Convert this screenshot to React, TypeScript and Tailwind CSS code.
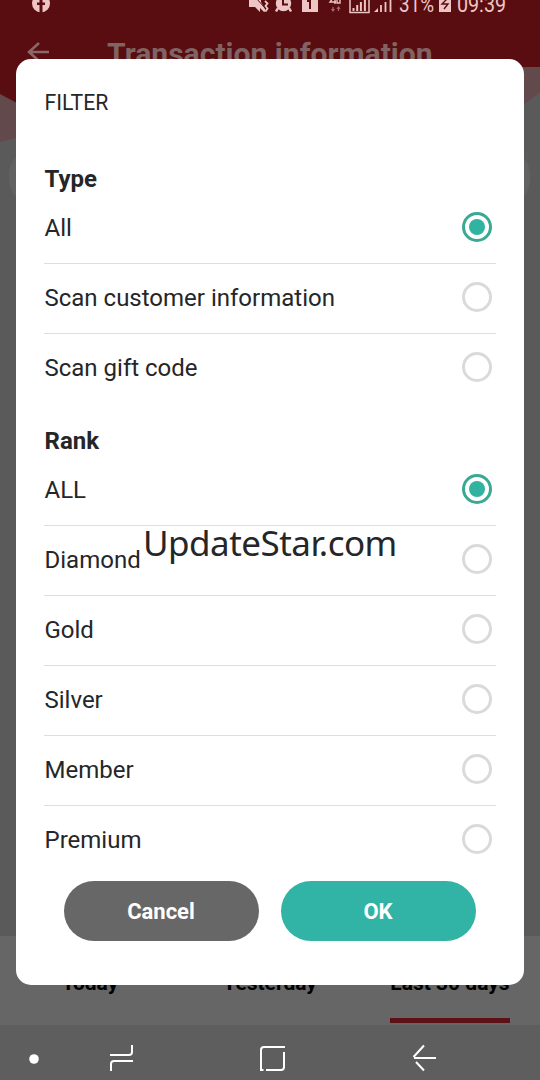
import React from "react";

const typeOptions = ["All", "Scan customer information", "Scan gift code"];
const rankOptions = ["ALL", "Diamond", "Gold", "Silver", "Member", "Premium"];

function Radio({ checked }: { checked: boolean }) {
  return (
    <span
      className={
        checked
          ? "mb-[2px] flex size-[30px] items-center justify-center rounded-full border-[3px] border-[#3aa994]"
          : "mb-[2px] flex size-[30px] items-center justify-center rounded-full border-[3px] border-[#dadada]"
      }
    >
      {checked && <span className="size-[16px] rounded-full bg-[#31b3a2]" />}
    </span>
  );
}

function Options({ title, items }: { title: string; items: string[] }) {
  return (
    <section>
      <h2 className="h-[30px] pl-[0.5px] text-[24px] leading-[30px] font-bold">{title}</h2>
      {items.map((item, i) => (
        <div
          key={item}
          className={
            i < items.length - 1
              ? "flex h-[70px] items-center justify-between border-b border-[#dedede] pr-1"
              : "flex h-[70px] items-center justify-between border-b border-transparent pr-1"
          }
        >
          <span className="mb-[1px] pl-[0.5px] text-[24px] leading-[30px] whitespace-nowrap">{item}</span>
          <Radio checked={i === 0} />
        </div>
      ))}
    </section>
  );
}

function StatusBar() {
  return (
    <div className="h-[18px] w-full overflow-hidden">
      <svg width="540" height="18" viewBox="0 0 540 18" fill="#eec5c5">
        <circle cx="41" cy="3.5" r="9" />
        <path d="M39.5 13V5H37V2.5h2.5V0h3v2.5H45V5h-2.5v8z" fill="#5a0d10" />
        <path d="M249 0h12v2l5 9-2 1-4-4v4l-5-5h-6z" />
        <path d="M256-2l9 10" stroke="#590d10" strokeWidth="1" />
        <path d="M265 1l2.5 2.5-2 2.5 2 2.5-2 3" fill="none" stroke="#eec5c5" strokeWidth="1.8" />
        <circle cx="283.5" cy="3.5" r="7.7" />
        <path d="M278 8l-2 3.5m13-3.5l2 3.5" stroke="#eec5c5" strokeWidth="2.5" />
        <path d="M283 0v4.5h5" fill="none" stroke="#5a0d10" strokeWidth="2" />
        <path d="M302-2h16v14h-16z" />
        <path d="M307 1h3v8" fill="none" stroke="#5a0d10" strokeWidth="2" />
        <path d="M333-2l-3 4h6m-1-4v6m8-5h-3v4h-3v-5" fill="none" stroke="#eec5c5" strokeWidth="1.4" />
        <path d="M333 11V7m-1.5 2l1.5 2 1.5-2m4 2V7m-1.5 2l1.5-2 1.5 2" fill="none" stroke="#a86b6c" strokeWidth="1.2" />
        <path d="M350-2v14.5h19V-2" fill="none" stroke="#eec5c5" strokeWidth="1.5" />
        <path d="M353.5 11V8m3.7 3V5m3.7 6V2m4 9v-12" stroke="#eec5c5" strokeWidth="2" />
        <path d="M374 12l4-4v4z" />
        <path d="M381 12V5m4.5 7V2m5 10V-2" stroke="#eec5c5" strokeWidth="1.8" />
        <path d="M439-2h12v14h-12z" />
        <path d="M447-1l-5 5h6l-4 5" fill="none" stroke="#5a0d10" strokeWidth="1.4" />
        <g fontFamily="Roboto, sans-serif" fontSize="22.5">
          <text x="399" y="12" textLength="35" lengthAdjust="spacingAndGlyphs">31%</text>
          <text x="457" y="12" textLength="49" lengthAdjust="spacingAndGlyphs">09:39</text>
        </g>
      </svg>
    </div>
  );
}

function Backdrop() {
  return (
    <>
      <header className="h-[59px] bg-[#590d10]">
        <StatusBar />
        <div className="flex h-[41px] items-start">
          <svg className="mt-[23px] ml-[27px] shrink-0" width="24" height="22" viewBox="0 0 24 22" fill="none" stroke="#8d6767" strokeWidth="2.5">
            <path d="M22 11H3M12 2L2 11l10 9" />
          </svg>
          <h1 className="mt-[18px] ml-[56px] text-[30.1px] leading-[36px] font-bold whitespace-nowrap text-[#806362]">
            Transaction information
          </h1>
        </div>
      </header>
      <svg className="h-[877px] w-full shrink-0" width="540" height="877" viewBox="0 59 540 877">
        <path d="M0 59h540v877H0z" fill="#5a5a5a" />
        <path d="M0 59h540v44l-20 10v-5L16 138l-16 4z" fill="#61494c" />
        <path d="M0 59h540v8H270L30 110 0 94z" fill="#590d10" />
        <path d="M522 67h18v25l-18 14z" fill="#61494c" />
        <path d="M540 92v844h-18V106z" fill="#5a5a5a" />
        <rect x="9" y="150" width="521" height="54" rx="24" fill="#626262" />
      </svg>
      <nav className="flex h-[89px] bg-[#666] text-[21px] leading-[24px] font-bold text-black">
        <div className="flex w-[180px] justify-center pt-[35px]">Today</div>
        <div className="flex w-[180px] justify-center pt-[35px]">Yesterday</div>
        <div className="flex w-[180px] flex-col items-center justify-between pt-[35px]">
          <span>Last 30 days</span>
          <span className="mb-[2px] h-[5px] w-[120px] bg-[#5b1116]" />
        </div>
      </nav>
      <footer className="h-[55px] bg-[#5e5e5e]">
        <svg width="540" height="55" viewBox="0 1025 540 55" fill="none" stroke="white" strokeWidth="2">
          <circle cx="34" cy="1059" r="4.8" fill="white" stroke="none" />
          <path d="M132 1045v7q0 3-3 3h-19M111 1071v-7q0-3 3-3h19" />
          <path d="M285 1047h-21q-3 0-3 3v20h2.5M266 1070h15q3 0 3-3v-15" />
          <path d="M436 1058h-22M424 1045.5l-10.5 11.5M416 1062l8 8.5" />
        </svg>
      </footer>
    </>
  );
}

export default function App() {
  return (
    <div className="relative flex h-[1080px] w-[540px] flex-col overflow-hidden bg-[#5a5a5a] font-['Roboto',sans-serif]">
      <Backdrop />
      <main role="dialog" className="absolute top-[59px] left-[16px] h-[925.5px] w-[507.5px] rounded-[15px] bg-white pr-[28px] pl-[28px] text-[#252628]">
        <div className="pt-[29px] pl-[0.5px] text-[21.2px] leading-[30px]">FILTER</div>
        <div className="flex flex-col gap-[22px] pt-[45.5px]">
          <Options title="Type" items={typeOptions} />
          <Options title="Rank" items={rankOptions} />
        </div>
        <div className="flex gap-[22px] pt-[5.5px] pl-[19.5px] text-[22px] font-bold text-white">
          <button className="h-[60px] w-[195px] rounded-full bg-[#676767]">Cancel</button>
          <button className="h-[60px] w-[195px] rounded-full bg-[#31b3a6]">OK</button>
        </div>
      </main>
      <div className="absolute top-[520px] left-[143px] font-['Noto_Sans',sans-serif] text-[35px] leading-[46px] tracking-[-0.52px] whitespace-nowrap text-[#252628]">
        UpdateStar.com
      </div>
    </div>
  );
}
